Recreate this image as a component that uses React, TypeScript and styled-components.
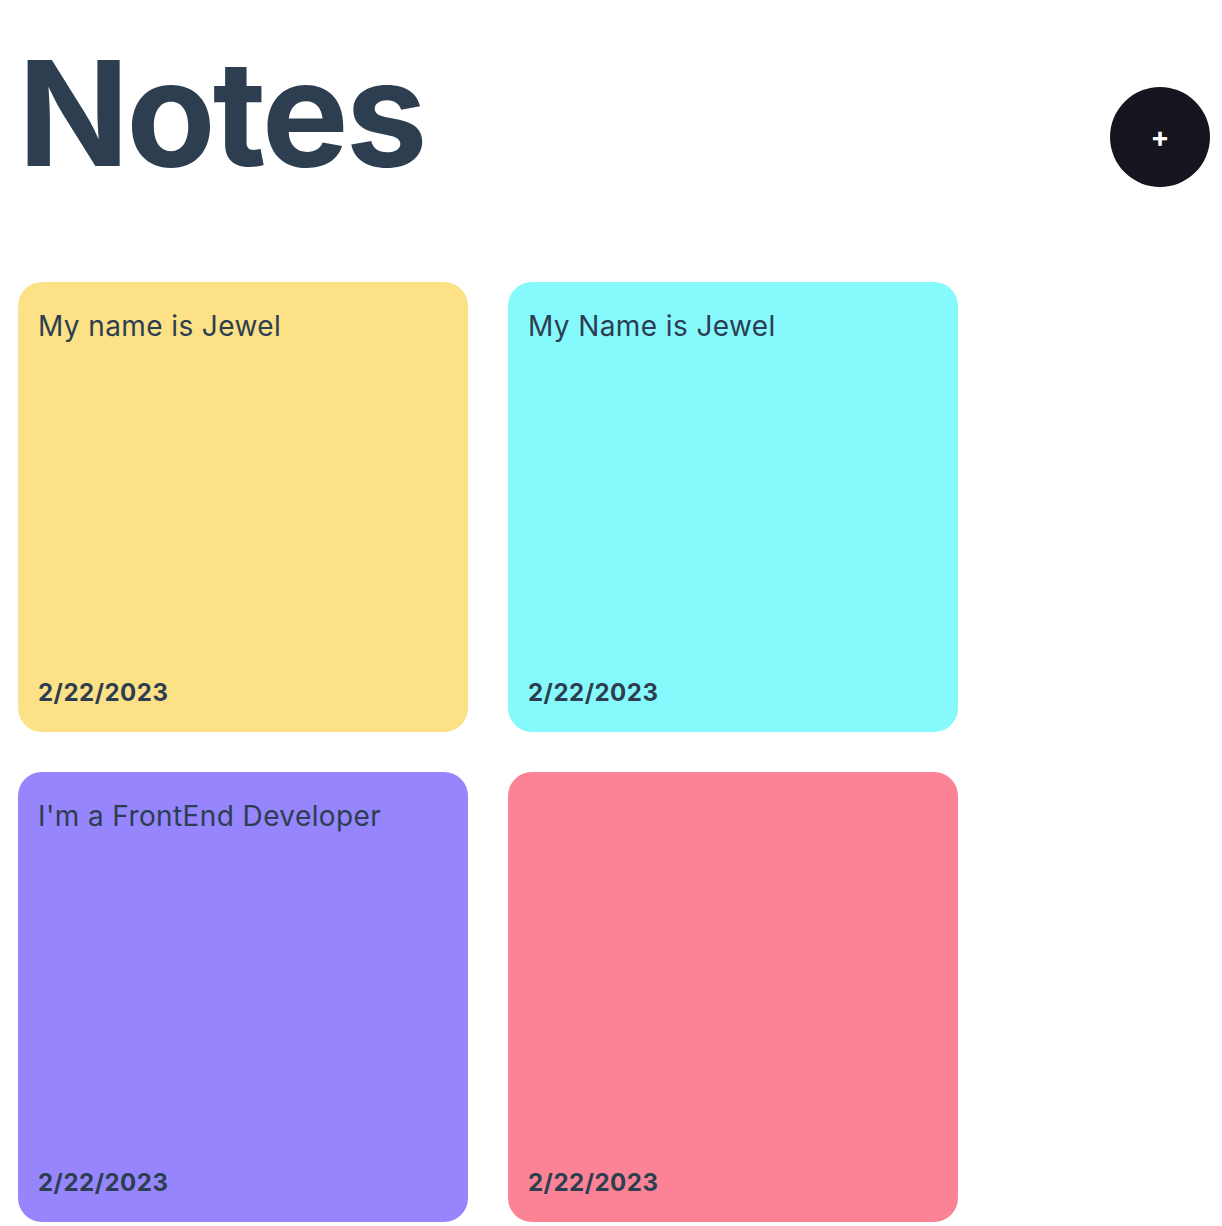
import React from "react";
import styled, { createGlobalStyle } from "styled-components";

interface Note {
  id: number;
  text: string;
  date: string;
  color: string;
}

const notes: Note[] = [
  { id: 1, text: "My name is Jewel", date: "2/22/2023", color: "#fce187" },
  { id: 2, text: "My Name is Jewel", date: "2/22/2023", color: "#86f9fd" },
  { id: 3, text: "I'm a FrontEnd Developer", date: "2/22/2023", color: "#9685fc" },
  { id: 4, text: "", date: "2/22/2023", color: "#fc8396" },
];

function App() {
  return (
    <>
      <GlobalStyle />
      <Page>
        <Header>
          <Title>Notes</Title>
          <AddButton type="button" aria-label="Add note">
            +
          </AddButton>
        </Header>
        <Grid>
          {notes.map((note) => (
            <Card key={note.id} $color={note.color}>
              <NoteText>{note.text}</NoteText>
              <NoteDate>{note.date}</NoteDate>
            </Card>
          ))}
        </Grid>
      </Page>
    </>
  );
}

export default App;

const GlobalStyle = createGlobalStyle`
  * {
    box-sizing: border-box;
  }
  body {
    margin: 0;
    background: #fff;
    font-family: Inter, "Noto Sans", sans-serif;
    color: #2c3e50;
  }
`;
const Page = styled.div`
  padding: 0 12px 0 18px;
`;
const Header = styled.header`
  display: flex;
  justify-content: space-between;
  align-items: center;
  height: 262px;
`;
const Title = styled.h1`
  margin: 0 0 36px 0;
  font-size: 146px;
  font-weight: 700;
  letter-spacing: -3px;
  line-height: 1;
  color: #2c3e50;
`;
const AddButton = styled.button`
  width: 100px;
  height: 100px;
  margin-top: 12px;
  border-radius: 50%;
  border: none;
  background: #16151f;
  color: #fff;
  font-family: Inter, sans-serif;
  font-size: 28px;
  font-weight: 700;
  line-height: 1;
  cursor: pointer;
`;
const Grid = styled.div`
  display: grid;
  grid-template-columns: repeat(2, 450px);
  gap: 40px;
  margin-top: 20px;
`;
const Card = styled.div<{ $color: string }>`
  height: 450px;
  border-radius: 24px;
  background: ${({ $color }) => $color};
  padding: 28px 20px 25px;
  display: flex;
  flex-direction: column;
  justify-content: space-between;
`;
const NoteText = styled.p`
  margin: 0;
  font-size: 28px;
  letter-spacing: 0.4px;
  line-height: 1.2;
  color: #2c3e50;
`;
const NoteDate = styled.span`
  font-size: 24px;
  font-weight: 700;
  letter-spacing: 0.5px;
  color: #2c3e50;
`;
